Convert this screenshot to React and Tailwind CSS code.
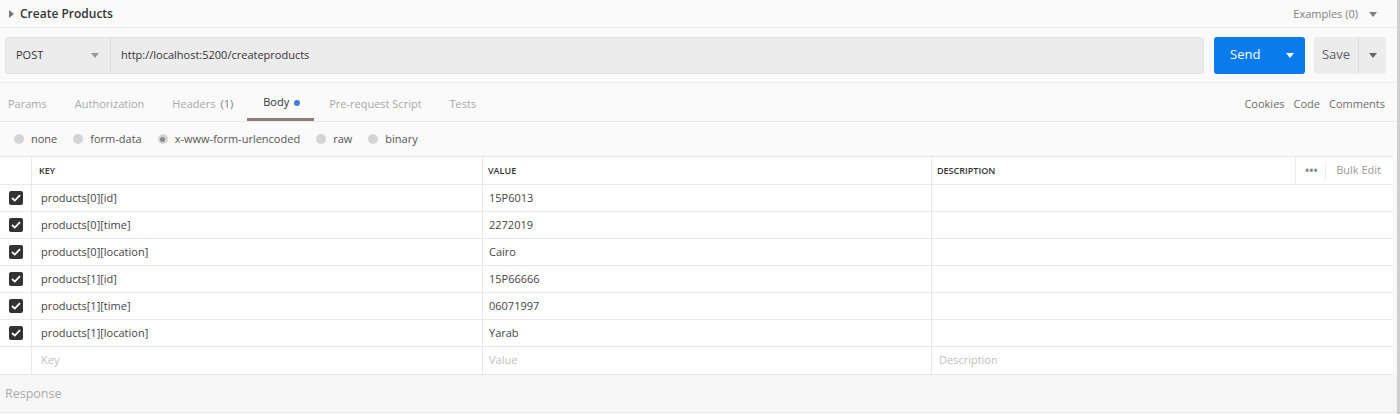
const rows = [
  ['products[0][id]', '15P6013'],
  ['products[0][time]', '2272019'],
  ['products[0][location]', 'Cairo'],
  ['products[1][id]', '15P66666'],
  ['products[1][time]', '06071997'],
  ['products[1][location]', 'Yarab']
];

function Caret({ className = '' }) {
  return (
    <svg width="8" height="5" viewBox="0 0 8 5" className={className}>
      <path d="M0 0 L8 0 L4 5 Z" fill="currentColor" />
    </svg>
  );
}

function Check() {
  return (
    <span className="flex h-[14px] w-[14px] items-center justify-center rounded-[2px] bg-[#333]">
      <svg width="10" height="8" viewBox="0 0 10 8">
        <path d="M1 4 L3.8 6.6 L9 1.2" stroke="white" strokeWidth="1.8" fill="none" />
      </svg>
    </span>
  );
}

function Radio({ label, checked }) {
  return (
    <label className="flex items-center gap-[7px]">
      <span className="flex h-[10px] w-[10px] items-center justify-center rounded-full bg-[#d4d4d4]">
        {checked && <span className="h-[5px] w-[5px] rounded-full bg-[#8a8a8a]" />}
      </span>
      <span>{label}</span>
    </label>
  );
}

export default function App() {
  const tabs = ['Params', 'Authorization', 'Headers', 'Body', 'Pre-request Script', 'Tests'];
  return (
    <div className="h-[414px] w-[1400px] overflow-hidden border-r-[3px] border-[#cfcfcf] bg-[#fafafa] text-[11px] text-[#505050]" style={{ fontFamily: '"Open Sans", sans-serif' }}>
      <div className="flex h-[28px] items-center justify-between border-b border-[#ececec] pt-[1px] pl-[9px] pr-[20px]">
        <div className="flex items-center gap-[6px]">
          <svg width="5" height="8" viewBox="0 0 5 8"><path d="M0 0 L5 4 L0 8 Z" fill="#777" /></svg>
          <span className="text-[12px] font-semibold text-[#333]">Create Products</span>
        </div>
        <div className="flex items-center gap-[11px] text-[#808080]">
          <span>Examples (0)</span>
          <Caret className="text-[#808080]" />
        </div>
      </div>

      <div className="flex h-[55px] items-center border-b border-[#ececec] pl-[5px] pr-[11px]">
        <div className="flex h-[37px] flex-1 rounded-[3px] border border-[#e2e2e2] bg-[#ececec]">
          <div className="flex w-[105px] items-center justify-between border-r border-[#dcdcdc] pl-[10px] pr-[11px] text-[#333]">
            <span>POST</span>
            <Caret className="text-[#999]" />
          </div>
          <div className="flex items-center pl-[10px] text-[#333]">http://localhost:5200/createproducts</div>
        </div>
        <div className="ml-[10px] flex h-[37px] w-[91px] items-center rounded-[3px] bg-[#097bed] text-[13px] text-white">
          <span className="pl-[16px]">Send</span>
          <Caret className="ml-auto mr-[11px] text-white" />
        </div>
        <div className="ml-[9px] flex h-[37px] w-[72px] rounded-[3px] bg-[#ececec] text-[13px] text-[#606060]">
          <span className="flex w-[45px] items-center justify-center border-r border-[#dedede]">Save</span>
          <span className="flex flex-1 items-center justify-center"><Caret className="text-[#666]" /></span>
        </div>
      </div>

      <div className="flex h-[39px] items-stretch justify-between border-b border-[#e8e8e8] pl-[8px] pr-[12px]">
        <div className="flex items-stretch">
          {tabs.map((t) => (
            <div
              key={t}
              className={
                t === 'Body'
                  ? 'mr-[15px] ml-[-14px] flex items-center border-b-[3px] border-[#8b817a] pl-[16px] pr-[14px] pt-[4px] text-[#333]'
                  : 'mr-[28px] flex items-center pt-[4px] text-[#a8a8a8]'
              }
            >
              {t}
              {t === 'Headers' && <span className="ml-[5px] text-[#808080]">(1)</span>}
              {t === 'Body' && <span className="ml-[5px] h-[6px] w-[6px] rounded-full bg-[#3f7fd9]" />}
            </div>
          ))}
        </div>
        <div className="flex items-center gap-[9px] pt-[4px] text-[#6c6c6c]">
          <span>Cookies</span>
          <span>Code</span>
          <span>Comments</span>
        </div>
      </div>

      <div className="flex h-[34px] items-center gap-[16px] pl-[14px] text-[#555]">
        <Radio label="none" />
        <Radio label="form-data" />
        <Radio label="x-www-form-urlencoded" checked />
        <Radio label="raw" />
        <Radio label="binary" />
      </div>

      <div className="mr-[4px] border-y border-[#e5e5e5] bg-white">
        <div className="grid h-[28px] grid-cols-[32px_451px_449px_1fr] border-b border-[#e8e8e8] text-[9px] font-semibold text-[#333]">
          <div className="border-r border-[#e8e8e8]" />
          <div className="flex items-center border-r border-[#e8e8e8] pl-[7px]">KEY</div>
          <div className="flex items-center border-r border-[#e8e8e8] pl-[5px]">VALUE</div>
          <div className="flex items-center pl-[5px]">
            <span>DESCRIPTION</span>
            <div className="ml-auto flex h-full items-center font-normal text-[#888]">
              <span className="flex h-full items-center border-l border-[#ececec] px-[8px] text-[14px] tracking-[-1px]">•••</span>
              <span className="mr-[12px] border-l border-[#ececec] pl-[10px] text-[11px] text-[#9a9a9a]">Bulk Edit</span>
            </div>
          </div>
        </div>
        {rows.map(([k, v]) => (
          <div key={k} className="grid h-[27px] grid-cols-[32px_451px_449px_1fr] border-b border-[#e8e8e8] text-[#444]">
            <div className="flex items-center justify-center border-r border-[#e8e8e8] pl-[1px]"><Check /></div>
            <div className="flex items-center border-r border-[#e8e8e8] pl-[9px]">{k}</div>
            <div className="flex items-center border-r border-[#e8e8e8] pl-[6px]">{v}</div>
            <div />
          </div>
        ))}
        <div className="grid h-[27px] grid-cols-[32px_451px_449px_1fr] text-[#c0c0c0]">
          <div className="border-r border-[#e8e8e8]" />
          <div className="flex items-center border-r border-[#e8e8e8] pl-[9px]">Key</div>
          <div className="flex items-center border-r border-[#e8e8e8] pl-[6px]">Value</div>
          <div className="flex items-center pl-[7px]">Description</div>
        </div>
      </div>

      <div className="flex h-[38px] items-center border-b border-[#e8e8e8] bg-[#f6f6f6] pt-[2px] pl-[5px] text-[12.5px] text-[#aaa]">Response</div>
    </div>
  );
}
